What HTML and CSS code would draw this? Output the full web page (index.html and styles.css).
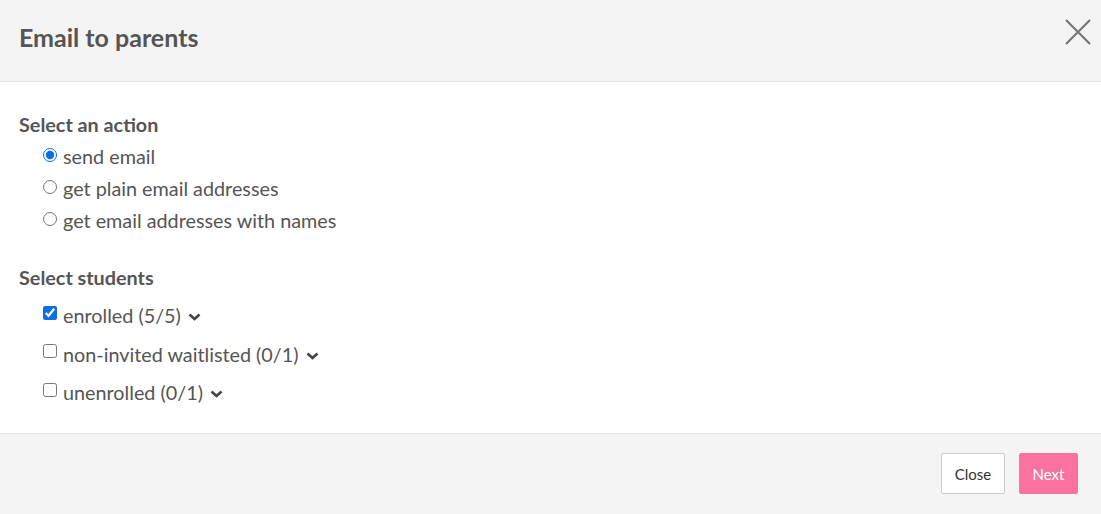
FILE: index.html
```html
<!DOCTYPE html>
<html>
<head>
<meta charset="utf-8">
<link rel="stylesheet" href="styles.css">
</head>
<body>
<div class="modal">
  <div class="header">
    <h1 class="title">Email to parents</h1>
    <button class="x" aria-label="close">
      <svg width="26" height="26" viewBox="0 0 26 26"><path d="M1 1 L25 25 M25 1 L1 25" stroke="#777" stroke-width="2.2" fill="none"/></svg>
    </button>
  </div>
  <div class="content">
    <div class="label">Select an action</div>
    <label class="opt"><input type="radio" name="a" checked> send email</label>
    <label class="opt"><input type="radio" name="a"> get plain email addresses</label>
    <label class="opt"><input type="radio" name="a"> get email addresses with names</label>
    <div class="label second">Select students</div>
    <div class="checks">
      <label class="chk"><input type="checkbox" checked> enrolled (5/5) <span class="chev"><svg width="13" height="8" viewBox="0 0 13 8"><path d="M1.5 1.5 L6.5 6 L11.5 1.5" stroke="#444" stroke-width="2.6" fill="none"/></svg></span></label>
      <label class="chk"><input type="checkbox"> non-invited waitlisted (0/1) <span class="chev"><svg width="13" height="8" viewBox="0 0 13 8"><path d="M1.5 1.5 L6.5 6 L11.5 1.5" stroke="#444" stroke-width="2.6" fill="none"/></svg></span></label>
      <label class="chk"><input type="checkbox"> unenrolled (0/1) <span class="chev"><svg width="13" height="8" viewBox="0 0 13 8"><path d="M1.5 1.5 L6.5 6 L11.5 1.5" stroke="#444" stroke-width="2.6" fill="none"/></svg></span></label>
    </div>
  </div>
  <div class="footer">
    <button class="btn close">Close</button>
    <button class="btn next">Next</button>
  </div>
</div>
</body>
</html>
```

FILE: styles.css
```css
* { box-sizing: border-box; }
html, body { margin: 0; padding: 0; }
body {
  font-family: Lato, "Open Sans", sans-serif;
  color: #555;
  background: #fff;
  width: 1101px;
  height: 514px;
  overflow: hidden;
}
.modal { display: flex; flex-direction: column; height: 514px; }
.header {
  height: 82px;
  background: #f4f4f4;
  border-bottom: 1px solid #e3e3e3;
  display: flex;
  justify-content: space-between;
  align-items: flex-start;
  padding: 0 10px 0 19px;
}
.title {
  margin: 22px 0 0;
  font-size: 25px;
  line-height: 30px;
  font-weight: 700;
  color: #555;
}
.x {
  margin-top: 19px;
  background: none;
  border: 0;
  padding: 0;
  width: 26px;
  height: 26px;
  cursor: pointer;
}
.x svg { display: block; }
.content {
  flex: 1;
  padding: 26px 19px 0;
  display: flex;
  flex-direction: column;
  align-items: flex-start;
}
.label {
  font-size: 19.8px;
  font-weight: 700;
  line-height: 32px;
  color: #555;
}
.label.second { margin-top: 25px; }
.opt {
  display: flex;
  align-items: center;
  font-size: 19.8px;
  line-height: 32px;
  padding-left: 24px;
}
.opt input {
  width: 14px;
  height: 14px;
  margin: 0 6px 3px 0;
  accent-color: #0b6ee8;
}
.checks { margin-top: 3px; display: flex; flex-direction: column; }
.chk {
  display: flex;
  align-items: center;
  font-size: 19.8px;
  line-height: 38.5px;
  padding-left: 24px;
}
.chk input {
  width: 14px;
  height: 14px;
  margin: 0 6px 5px 0;
  accent-color: #0b6ee8;
}
.chev { display: inline-flex; margin-left: 7px; margin-top: 4px; }
.chev svg { display: block; }
.footer {
  height: 81px;
  background: #f4f4f4;
  border-top: 1px solid #e3e3e3;
  display: flex;
  justify-content: flex-end;
  align-items: flex-start;
  gap: 14px;
  padding: 19px 23px 0 0;
}
.btn {
  height: 41px;
  font-family: Lato, sans-serif;
  font-size: 15px;
  border-radius: 2px;
  cursor: pointer;
  padding: 0;
}
.close {
  width: 64px;
  background: #fff;
  border: 1px solid #ccc;
  color: #333;
}
.next {
  width: 59px;
  background: #fb72a0;
  border: 1px solid #fb72a0;
  color: #fff;
}
```
